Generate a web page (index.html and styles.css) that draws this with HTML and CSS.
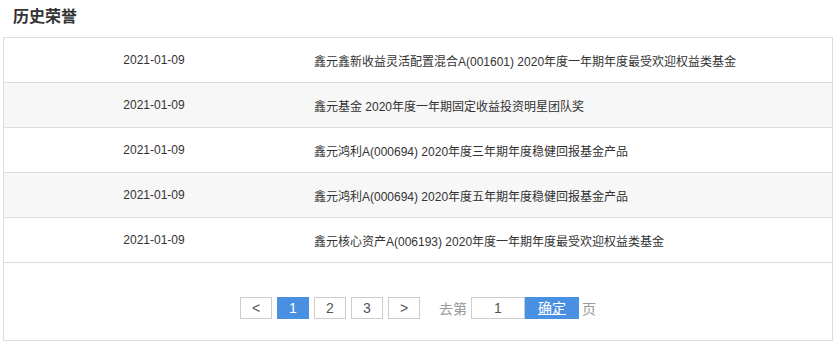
FILE: index.html
```html
<!DOCTYPE html>
<html lang="zh-CN">
<head>
<meta charset="utf-8">
<title>历史荣誉</title>
<link rel="stylesheet" href="styles.css">
</head>
<body>
<div class="page">
  <h2 class="title">历史荣誉</h2>
  <div class="panel">
    <div class="rows">
      <div class="row"><div class="date">2021-01-09</div><div class="desc">鑫元鑫新收益灵活配置混合A(001601) 2020年度一年期年度最受欢迎权益类基金</div></div>
      <div class="row alt"><div class="date">2021-01-09</div><div class="desc">鑫元基金 2020年度一年期固定收益投资明星团队奖</div></div>
      <div class="row"><div class="date">2021-01-09</div><div class="desc">鑫元鸿利A(000694) 2020年度三年期年度稳健回报基金产品</div></div>
      <div class="row alt"><div class="date">2021-01-09</div><div class="desc">鑫元鸿利A(000694) 2020年度五年期年度稳健回报基金产品</div></div>
      <div class="row"><div class="date">2021-01-09</div><div class="desc">鑫元核心资产A(006193) 2020年度一年期年度最受欢迎权益类基金</div></div>
    </div>
    <div class="pager">
      <span class="pbtn">&lt;</span>
      <span class="pbtn active">1</span>
      <span class="pbtn">2</span>
      <span class="pbtn">3</span>
      <span class="pbtn">&gt;</span>
      <span class="goto">去第</span>
      <span class="pinput">1</span>
      <span class="confirm">确定</span>
      <span class="unit">页</span>
    </div>
  </div>
</div>
</body>
</html>
```
FILE: styles.css
```css
html, body {
  margin: 0;
  padding: 0;
  background: #fff;
}
body {
  font-family: "Liberation Sans", "Noto Sans CJK SC", Arial, sans-serif;
  color: #333;
}
.page {
  padding: 0 4px 0 3px;
}
.title {
  margin: 0 0 3px 0;
  padding-left: 10px;
  height: 34px;
  line-height: 34px;
  font-size: 16px;
  font-weight: bold;
  color: #333;
}
.panel {
  border: 1px solid #ddd;
}
.row {
  display: flex;
  height: 44px;
  align-items: center;
  border-bottom: 1px solid #ddd;
  font-size: 12px;
  color: #333;
  background: #fff;
}
.row.alt {
  background: #f7f7f7;
}
.date {
  width: 300px;
  text-align: center;
}
.desc {
  padding-left: 10px;
}
.pager {
  display: flex;
  justify-content: center;
  align-items: center;
  padding: 34px 0 21px;
  font-size: 14px;
}
.pbtn {
  width: 30px;
  height: 20px;
  line-height: 20px;
  border: 1px solid #ccc;
  text-align: center;
  color: #555;
  margin-right: 5px;
  font-size: 14px;
}
.pbtn.active {
  background: #4a90e2;
  border-color: #4a90e2;
  color: #fff;
}
.goto {
  margin-left: 14px;
  margin-right: 4px;
  color: #999;
}
.pinput {
  width: 52px;
  height: 20px;
  line-height: 20px;
  border: 1px solid #ccc;
  text-align: center;
  color: #555;
}
.confirm {
  width: 54px;
  height: 22px;
  line-height: 22px;
  background: #4a90e2;
  color: #fff;
  text-align: center;
  text-decoration: underline;
}
.unit {
  margin-left: 3px;
  color: #999;
}
```
